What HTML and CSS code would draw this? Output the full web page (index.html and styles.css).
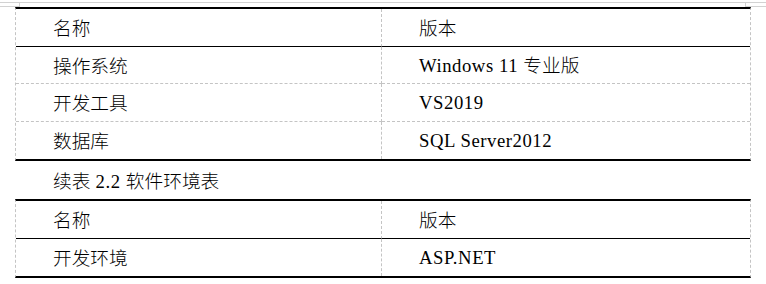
FILE: index.html
```html
<!DOCTYPE html>
<html lang="zh-CN">
<head>
<meta charset="utf-8">
<title>软件环境表</title>
<link rel="stylesheet" href="styles.css">
</head>
<body>
<div class="ruler">
  <div class="mark mark-left"></div>
  <div class="mark mark-right"></div>
</div>
<div class="page">
  <div class="tbl">
    <div class="cell head"><span class="txt">名称</span></div>
    <div class="cell head"><span class="txt">版本</span></div>
    <div class="cell"><span class="txt">操作系统</span></div>
    <div class="cell"><span class="txt"><span class="en">Windows 11 </span>专业版</span></div>
    <div class="cell"><span class="txt">开发工具</span></div>
    <div class="cell"><span class="txt"><span class="en">VS2019</span></span></div>
    <div class="cell last"><span class="txt">数据库</span></div>
    <div class="cell last"><span class="txt"><span class="en">SQL Server2012</span></span></div>
  </div>
  <div class="caption"><span class="txt">续表<span class="en"> 2.2 </span>软件环境表</span></div>
  <div class="tbl">
    <div class="cell head"><span class="txt">名称</span></div>
    <div class="cell head"><span class="txt">版本</span></div>
    <div class="cell last"><span class="txt">开发环境</span></div>
    <div class="cell last"><span class="txt"><span class="en">ASP.NET</span></span></div>
  </div>
</div>
</body>
</html>
```

FILE: styles.css
```css
* { box-sizing: border-box; }
html, body {
  margin: 0;
  padding: 0;
  background: #fff;
}
body {
  width: 766px;
  height: 284px;
  overflow: hidden;
  font-family: "Noto Sans CJK SC", sans-serif;
  font-size: 18.7px;
  font-weight: 300;
  color: #000;
}
.ruler {
  margin-top: 2px;
  height: 5px;
  border-top: 1px solid #d2d2d2;
  display: flex;
  justify-content: space-between;
}
.mark {
  height: 4px;
  border-bottom: 1px solid #d2d2d2;
}
.mark-left {
  width: 20px;
  border-right: 1px solid #d2d2d2;
}
.mark-right {
  width: 21px;
  border-left: 1px solid #d2d2d2;
}
.page {
  padding-left: 15px;
  width: 751px;
}
.tbl {
  display: grid;
  grid-template-columns: 366px 368px;
  border-top: 2px solid #000;
  border-bottom: 2px solid #000;
  border-left: 1px dashed #c4c4c4;
  border-right: 1px dashed #c4c4c4;
}
.cell {
  height: 37.5px;
  display: flex;
  align-items: center;
  padding-left: 37px;
  padding-top: 1px;
  border-bottom: 1px dashed #c4c4c4;
}
.txt {
  line-height: 1;
  white-space: pre;
}
.cell:nth-child(odd) {
  border-right: 1px dashed #c4c4c4;
}
.cell.head {
  border-bottom: 1px solid #000;
}
.cell.last {
  border-bottom: none;
}
.en {
  font-family: "Liberation Serif", serif;
  font-size: 18.7px;
  font-weight: 400;
  letter-spacing: 0.55px;
  white-space: pre;
}
.caption {
  height: 38px;
  display: flex;
  align-items: center;
  padding-left: 38px;
  padding-top: 2px;
}
```
